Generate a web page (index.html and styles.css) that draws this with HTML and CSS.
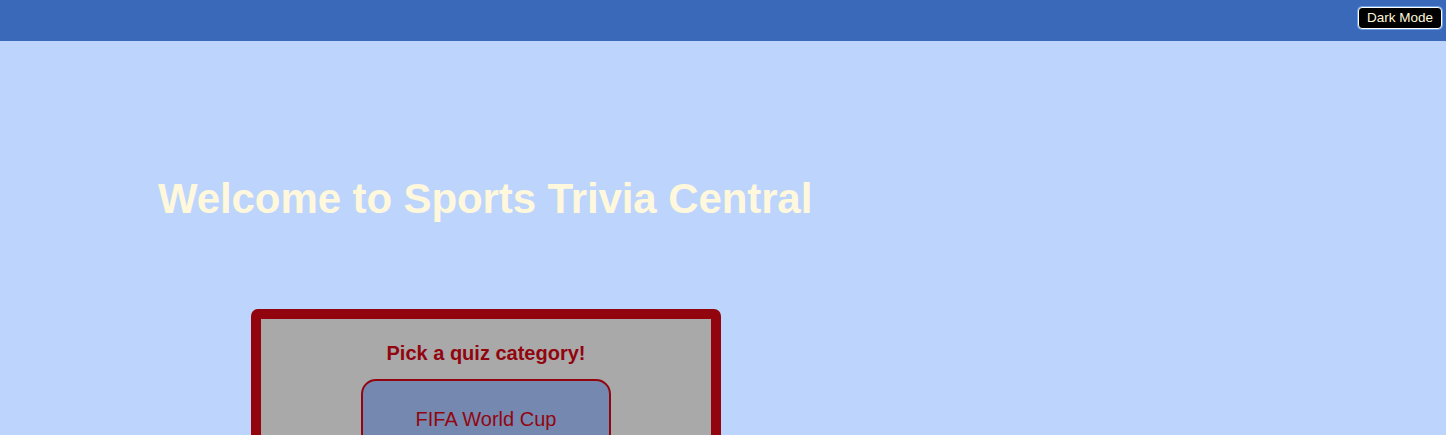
FILE: index.html
```html
<!DOCTYPE html>
<html>
<head>
<meta charset="utf-8">
<link rel="stylesheet" href="styles.css">
</head>
<body>
<header class="topbar">
  <button class="mode-btn">Dark Mode</button>
</header>
<main class="main">
  <h1 class="title">Welcome to Sports Trivia Central</h1>
  <section class="card">
    <h2 class="card-title">Pick a quiz category!</h2>
    <button class="cat-btn">FIFA World Cup</button>
  </section>
</main>
</body>
</html>
```
FILE: styles.css
```css
html, body {
  margin: 0;
  padding: 0;
}
body {
  background: #bdd5fc;
  font-family: "Liberation Sans", Arial, sans-serif;
  height: 435px;
  overflow: hidden;
}
.topbar {
  height: 41px;
  background: #3a69b9;
  display: flex;
  justify-content: flex-end;
  align-items: flex-start;
  padding: 7px 4px 0 0;
  box-sizing: border-box;
}
.mode-btn {
  background: #000;
  color: #fff8dc;
  font-family: "Liberation Sans", Arial, sans-serif;
  font-size: 13.5px;
  border: 1px solid #fff;
  box-shadow: 0 0 0 1px #6fa0e8;
  border-radius: 4px;
  padding: 3px 8px;
  height: 22px;
  line-height: 14px;
}
.main {
  padding: 0 0 0 158px;
}
.title {
  margin: 134px 0 0 0;
  font-size: 42px;
  font-weight: bold;
  color: #fff8dc;
  line-height: 48px;
  letter-spacing: -0.1px;
}
.card {
  margin: 86px 0 0 93px;
  width: 450px;
  border: 10px solid #92050f;
  border-radius: 7px;
  background: #a9a9a9;
  display: flex;
  flex-direction: column;
  align-items: center;
  padding-top: 22px;
  height: 200px;
}
.card-title {
  margin: 0;
  font-size: 20px;
  font-weight: bold;
  color: #92050f;
  line-height: 24px;
}
.cat-btn {
  margin-top: 14px;
  width: 250px;
  height: 80px;
  background: #7589b0;
  border: 2px solid #92050f;
  border-radius: 15px;
  color: #92050f;
  font-family: "Liberation Sans", Arial, sans-serif;
  font-size: 20px;
}
```
